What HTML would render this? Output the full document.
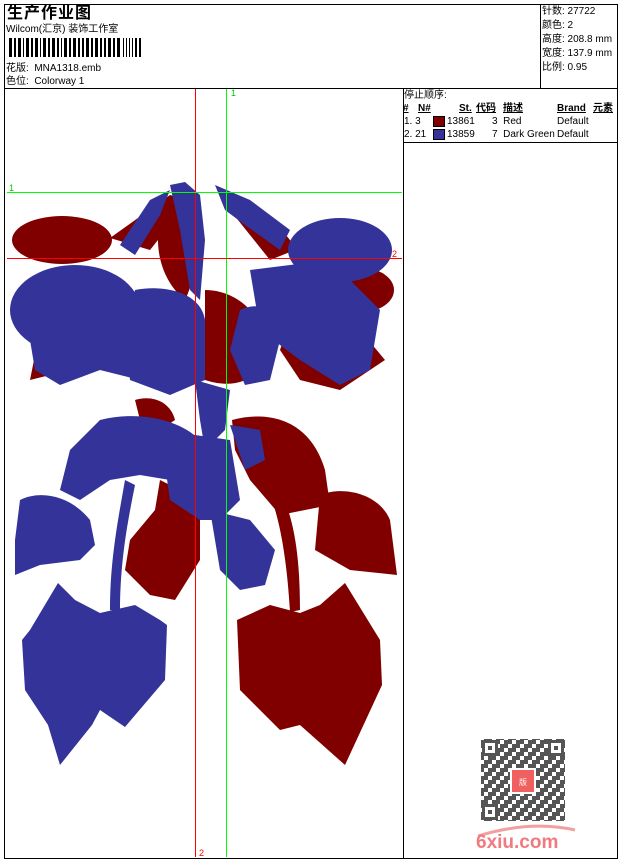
<!DOCTYPE html>
<html><head><meta charset="utf-8"><style>
body{margin:0;background:#fff;width:620px;height:860px;position:relative;overflow:hidden;font-family:"Liberation Sans","Noto Sans CJK SC",sans-serif;color:#000}
.a{position:absolute;white-space:nowrap}
.s{font-size:10px;line-height:12px}
</style></head><body>
<div class="a" style="left:4px;top:4px;width:612px;height:853px;border:1px solid #000"></div>
<div class="a" style="left:4px;top:88px;width:613px;border-top:1px solid #000"></div>
<div class="a" style="left:540px;top:4px;height:84px;border-left:1px solid #000"></div>
<div class="a" style="left:403px;top:88px;height:770px;border-left:1px solid #000"></div>
<div class="a" style="left:403px;top:142px;width:214px;border-top:1px solid #000"></div>

<div class="a" style="left:7px;top:5px;font-size:16px;line-height:18px;font-weight:bold;letter-spacing:1px">生产作业图</div>
<div class="a s" style="left:6px;top:24px">Wilcom(汇京) 装饰工作室</div>
<svg class="a" style="left:9px;top:38px" width="132" height="19">
<g fill="#000">
<rect x="0" y="0" width="3" height="19"/><rect x="5" y="0" width="2" height="19"/><rect x="9" y="0" width="3" height="19"/><rect x="14" y="0" width="1" height="19"/><rect x="17" y="0" width="3" height="19"/><rect x="22" y="0" width="2" height="19"/><rect x="26" y="0" width="3" height="19"/><rect x="31" y="0" width="1" height="19"/><rect x="34" y="0" width="3" height="19"/><rect x="39" y="0" width="2" height="19"/><rect x="43" y="0" width="3" height="19"/><rect x="48" y="0" width="2" height="19"/><rect x="52" y="0" width="1" height="19"/><rect x="55" y="0" width="3" height="19"/><rect x="60" y="0" width="2" height="19"/><rect x="64" y="0" width="3" height="19"/><rect x="69" y="0" width="2" height="19"/><rect x="73" y="0" width="2" height="19"/><rect x="77" y="0" width="3" height="19"/><rect x="82" y="0" width="2" height="19"/><rect x="86" y="0" width="3" height="19"/><rect x="91" y="0" width="2" height="19"/><rect x="95" y="0" width="2" height="19"/><rect x="99" y="0" width="3" height="19"/><rect x="104" y="0" width="2" height="19"/><rect x="108" y="0" width="3" height="19"/><rect x="114" y="0" width="1" height="19"/><rect x="117" y="0" width="1" height="19"/><rect x="120" y="0" width="1" height="19"/><rect x="123" y="0" width="1" height="19"/><rect x="126" y="0" width="2" height="19"/><rect x="130" y="0" width="2" height="19"/>
</g></svg>
<div class="a s" style="left:6px;top:63px">花版:&nbsp; MNA1318.emb</div>
<div class="a s" style="left:6px;top:76px">色位:&nbsp; Colorway 1</div>

<div class="a s" style="left:542px;top:5px;line-height:14px">针数: 27722<br>颜色: 2<br>高度: 208.8 mm<br>宽度: 137.9 mm<br>比例: 0.95</div>

<div class="a s" style="left:404px;top:90px">停止顺序:</div>
<div class="a s" style="left:403px;top:103px;font-weight:bold;width:214px;height:12px">
<span class="a" style="left:0;top:0;text-decoration:underline">#</span>
<span class="a" style="left:15px;top:0;text-decoration:underline">N#</span>
<span class="a" style="left:56px;top:0;text-decoration:underline">St.</span>
<span class="a" style="left:73px;top:0;text-decoration:underline">代码</span>
<span class="a" style="left:100px;top:0;text-decoration:underline">描述</span>
<span class="a" style="left:154px;top:0;text-decoration:underline">Brand</span>
<span class="a" style="left:190px;top:0;text-decoration:underline">元素</span>
</div>
<div class="a s" style="left:404px;top:116px">1. 3</div>
<div class="a" style="left:433px;top:116px;width:10px;height:9px;background:#800000;border:1px solid #000"></div>
<div class="a s" style="left:447px;top:116px">13861</div>
<div class="a s" style="left:492px;top:116px">3&nbsp; Red</div>
<div class="a s" style="left:557px;top:116px">Default</div>
<div class="a s" style="left:404px;top:129px">2. 21</div>
<div class="a" style="left:433px;top:129px;width:10px;height:9px;background:#333399;border:1px solid #000"></div>
<div class="a s" style="left:447px;top:129px">13859</div>
<div class="a s" style="left:492px;top:129px">7&nbsp; Dark Green</div>
<div class="a s" style="left:557px;top:129px">Default</div>

<svg class="a" style="left:0;top:0" width="620" height="860">
<defs>
<pattern id="qr" width="12" height="12" patternUnits="userSpaceOnUse">
<rect width="12" height="12" fill="#fff"/>
<rect x="0" y="0" width="4" height="4" fill="#555"/><rect x="8" y="0" width="4" height="8" fill="#555"/><rect x="4" y="4" width="4" height="4" fill="#555"/><rect x="0" y="8" width="8" height="4" fill="#555"/>
</pattern>
</defs>
<g fill="#800000">
<ellipse cx="62" cy="240" rx="50" ry="24"/>
<path d="M110 238 L170 195 L190 200 L150 250 Z"/>
<path d="M165 205 C150 240 160 280 185 300 C200 270 195 230 180 200 Z"/>
<path d="M205 290 C240 290 270 320 265 360 C250 390 220 385 205 380 Z"/>
<path d="M235 195 C260 220 290 230 295 250 L270 260 L230 210 Z"/>
<ellipse cx="362" cy="290" rx="32" ry="22"/>
<path d="M290 320 L360 330 L385 360 L340 390 L300 380 L280 350 Z"/>
<path d="M40 330 L80 330 L70 370 L30 380 Z"/>
<path d="M135 400 C150 395 170 400 175 420 L160 430 L140 420 Z"/>
<path d="M232 420 C270 410 310 420 325 470 L330 505 L280 515 L250 480 L235 450 Z"/>
<path d="M320 495 C345 485 380 495 390 520 L397 575 L350 570 L315 550 Z"/>
<path d="M280 490 C295 520 300 560 300 610 L290 612 C287 560 280 520 270 495 Z"/>
<path d="M160 480 L200 500 L200 560 L175 600 L150 595 L125 570 L130 540 L155 510 Z"/>
<path d="M345 583 L380 640 L382 685 L345 765 L300 725 L280 730 L240 690 L237 620 L270 605 L300 613 L320 605 Z"/>
</g>
<g fill="#333399">
<path d="M170 185 L185 182 L200 195 L205 240 L200 300 L190 290 L180 230 Z"/>
<path d="M215 185 L250 200 L290 230 L280 250 L245 225 L225 210 Z"/>
<path d="M120 245 L150 200 L170 190 L160 215 L135 255 Z"/>
<ellipse cx="75" cy="310" rx="65" ry="45"/>
<path d="M30 340 L130 320 L140 380 L100 370 L60 385 L35 370 Z"/>
<path d="M135 290 C160 285 200 290 205 320 L205 380 L170 395 L130 380 L125 330 Z"/>
<path d="M240 310 C260 300 280 310 280 340 L270 380 L245 385 L230 350 Z"/>
<ellipse cx="340" cy="250" rx="52" ry="32"/>
<path d="M250 270 L330 260 L380 310 L370 370 L340 385 L300 360 L260 330 Z"/>
<path d="M195 380 L230 390 L225 430 L205 450 L200 420 Z"/>
<path d="M100 420 C140 410 180 420 200 440 L210 480 L170 480 L140 475 L110 480 L80 500 L60 490 L70 450 Z"/>
<path d="M160 430 L230 440 L240 500 L220 520 L200 520 L170 500 Z"/>
<path d="M20 500 C40 490 70 495 90 520 L95 545 L80 560 L40 565 L15 575 L15 540 Z"/>
<path d="M125 480 C118 520 110 560 110 610 L120 612 C120 560 128 520 135 485 Z"/>
<path d="M210 510 L250 520 L275 550 L265 585 L240 590 L220 570 Z"/>
<path d="M230 425 L260 430 L265 460 L245 470 Z"/>
<path d="M58 583 L75 600 L100 613 L135 605 L160 620 L167 625 L165 680 L125 727 L100 710 L92 725 L60 765 L48 725 L25 690 L22 640 L30 630 Z"/>
</g>
<line x1="195.5" y1="89" x2="195.5" y2="857" stroke="#ff0000"/>
<line x1="226.5" y1="89" x2="226.5" y2="857" stroke="#00ff00"/>
<line x1="7" y1="192.5" x2="402" y2="192.5" stroke="#00ff00"/>
<line x1="7" y1="258.5" x2="402" y2="258.5" stroke="#ff0000"/>
<text x="9" y="191" fill="#00cc00" font-size="9" font-family="Liberation Sans">1</text>
<text x="231" y="96" fill="#00cc00" font-size="9" font-family="Liberation Sans">1</text>
<text x="392" y="257" fill="#ff0000" font-size="9" font-family="Liberation Sans">2</text>
<text x="199" y="856" fill="#ff0000" font-size="9" font-family="Liberation Sans">2</text>
<rect x="481" y="739" width="84" height="82" fill="url(#qr)"/>
<g fill="#fff" stroke="#555" stroke-width="3">
<rect x="483.5" y="741.5" width="13" height="13"/>
<rect x="549.5" y="741.5" width="13" height="13"/>
<rect x="483.5" y="805.5" width="13" height="13"/>
</g>
<g fill="#555"><rect x="488" y="746" width="4" height="4"/><rect x="554" y="746" width="4" height="4"/><rect x="488" y="810" width="4" height="4"/></g>
<rect x="510" y="768" width="26" height="26" fill="#fff"/>
<rect x="512" y="770" width="22" height="22" fill="#f06060"/>
<text x="523" y="785" fill="#fff" font-size="8" text-anchor="middle" font-family="Noto Sans CJK SC">版</text>
<path d="M478 836 Q530 820 575 830" stroke="#f0a0a0" stroke-width="3" fill="none"/>
<text x="476" y="848" fill="#f07a80" font-size="19" font-weight="bold" font-family="Liberation Sans">6xiu.com</text>
</svg>
</body></html>
